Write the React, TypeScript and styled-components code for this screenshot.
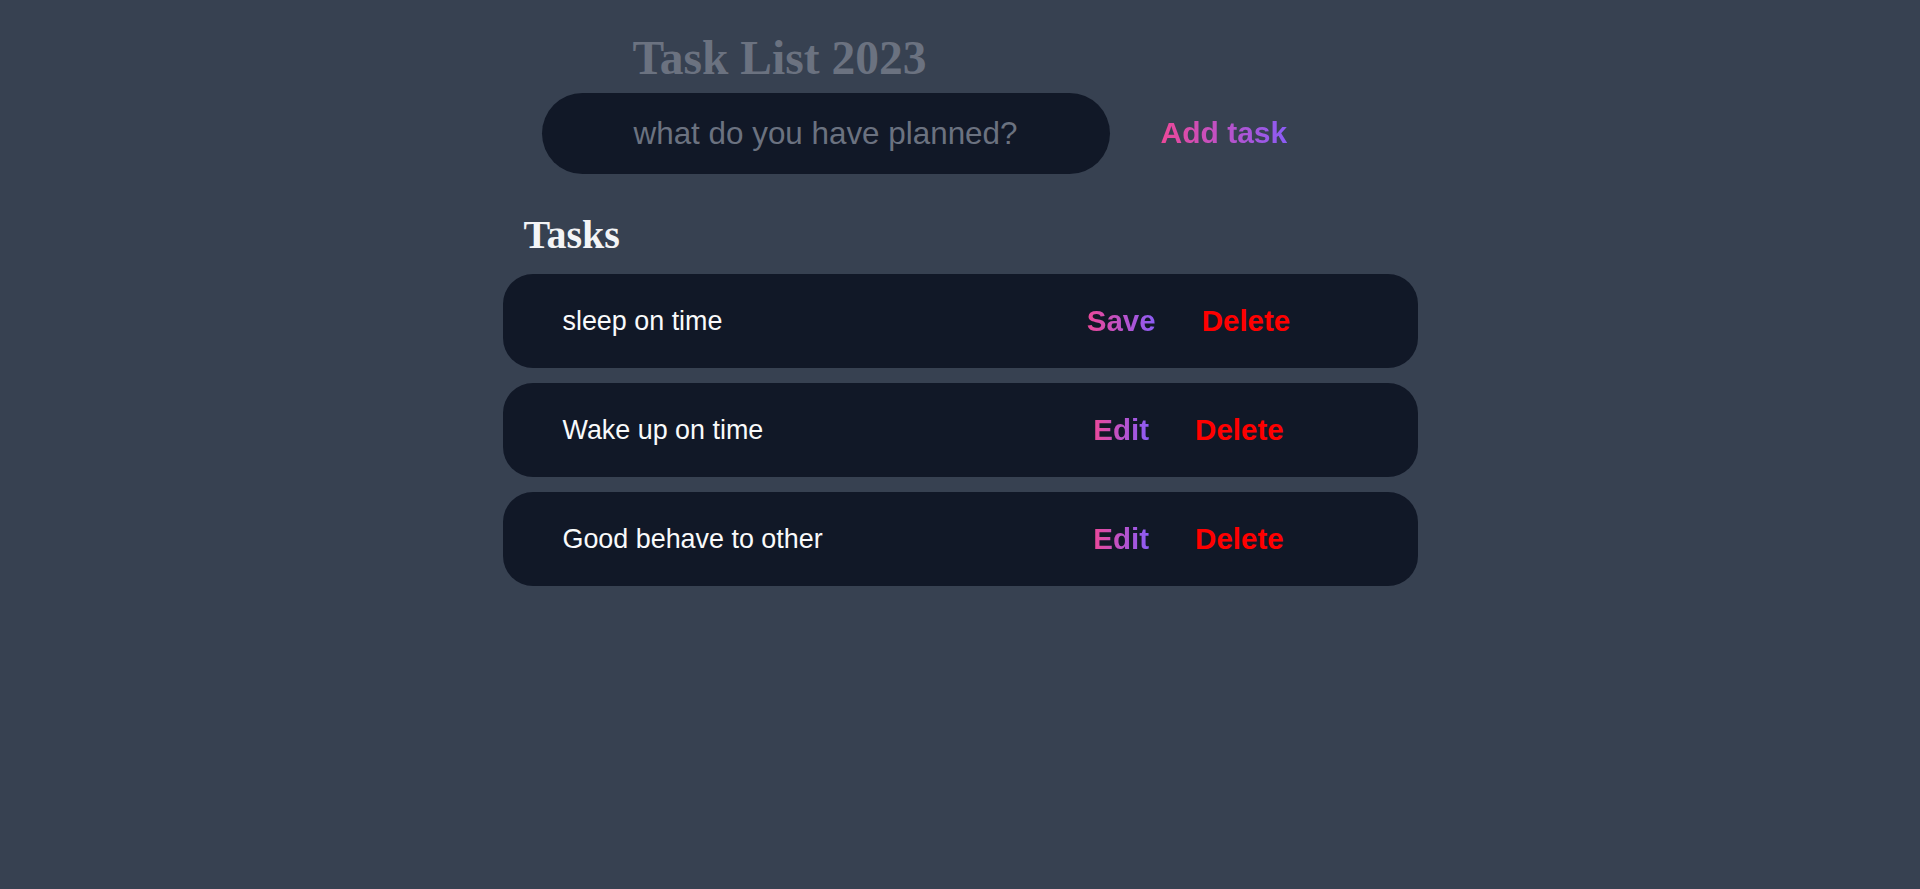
import React, { useState } from "react";
import styled, { createGlobalStyle } from "styled-components";

const GlobalStyle = createGlobalStyle`
  html, body {
    margin: 0;
    padding: 0;
    background: #374151;
  }
  body {
    font-family: "Liberation Sans", Arial, sans-serif;
    min-height: 100vh;
  }
  * { box-sizing: border-box; }
`;

const Page = styled.main`
  width: 915px;
  margin: 0 auto;
  display: flex;
  flex-direction: column;
`;

const Header = styled.header`
  display: flex;
  flex-direction: column;
  padding-top: 34px;
`;

const Title = styled.h1`
  margin: 0 0 0 130px;
  font-family: "Liberation Serif", "Times New Roman", serif;
  font-weight: 700;
  font-size: 47.5px;
  line-height: 48px;
  color: #6b7280;
`;

const Form = styled.form`
  display: flex;
  align-items: center;
  gap: 51px;
  margin: 11px 0 0 39px;
`;

const Input = styled.input`
  width: 568px;
  height: 81px;
  border: none;
  outline: none;
  border-radius: 9999px;
  background: #111827;
  color: #f3f4f6;
  font-family: "Liberation Sans", Arial, sans-serif;
  font-size: 31.4px;
  text-align: center;
  padding: 0 20px;
  &::placeholder {
    color: #6b7280;
  }
`;

const GradientButton = styled.button<{ $size?: number }>`
  border: none;
  padding: 0;
  margin: 0;
  cursor: pointer;
  font-family: "Liberation Sans", Arial, sans-serif;
  font-weight: 700;
  font-size: ${(p) => p.$size ?? 29.5}px;
  line-height: 1.15;
  background: linear-gradient(to right, #ec4899, #8b5cf6);
  -webkit-background-clip: text;
  background-clip: text;
  color: transparent;
`;

const DeleteButton = styled.button`
  border: none;
  padding: 0;
  margin: 0;
  background: none;
  cursor: pointer;
  font-family: "Liberation Sans", Arial, sans-serif;
  font-weight: 700;
  font-size: 29.5px;
  line-height: 1.15;
  color: #ff0000;
`;

const Section = styled.section`
  display: flex;
  flex-direction: column;
  margin-top: 41px;
`;

const SectionTitle = styled.h2`
  margin: 0 0 19px 21px;
  font-family: "Liberation Serif", "Times New Roman", serif;
  font-weight: 700;
  font-size: 40px;
  line-height: 40px;
  color: #f3f4f6;
`;

const List = styled.div`
  display: flex;
  flex-direction: column;
  gap: 15px;
`;

const Row = styled.div`
  display: grid;
  grid-template-columns: 1fr 338px;
  align-items: center;
  height: 94px;
  padding: 0 60px;
  background: #111827;
  border-radius: 30px;
`;

const TaskText = styled.span`
  font-size: 26.9px;
  color: #f9fafb;
`;

const Actions = styled.div`
  display: flex;
  justify-content: center;
  align-items: center;
  gap: 46px;
`;

type Task = { id: number; text: string; editing: boolean };

export default function App() {
  const [tasks] = useState<Task[]>([
    { id: 1, text: "sleep on time", editing: true },
    { id: 2, text: "Wake up on time", editing: false },
    { id: 3, text: "Good behave to other", editing: false },
  ]);

  return (
    <>
      <GlobalStyle />
      <Page>
        <Header>
          <Title>Task List 2023</Title>
          <Form onSubmit={(e) => e.preventDefault()}>
            <Input placeholder="what do you have planned?" />
            <GradientButton type="submit" $size={30}>
              Add task
            </GradientButton>
          </Form>
        </Header>
        <Section>
          <SectionTitle>Tasks</SectionTitle>
          <List>
            {tasks.map((t) => (
              <Row key={t.id}>
                <TaskText>{t.text}</TaskText>
                <Actions>
                  <GradientButton type="button">
                    {t.editing ? "Save" : "Edit"}
                  </GradientButton>
                  <DeleteButton type="button">Delete</DeleteButton>
                </Actions>
              </Row>
            ))}
          </List>
        </Section>
      </Page>
    </>
  );
}
